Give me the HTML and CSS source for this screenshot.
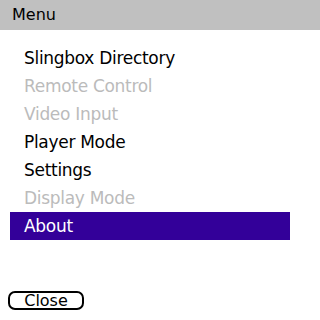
FILE: index.html
```html
<!DOCTYPE html>
<html>
<head>
<meta charset="utf-8">
<link rel="stylesheet" href="styles.css">
</head>
<body>
<div class="screen">
  <div class="title">Menu</div>
  <ul class="menu">
    <li class="item">Slingbox Directory</li>
    <li class="item disabled">Remote Control</li>
    <li class="item disabled">Video Input</li>
    <li class="item">Player Mode</li>
    <li class="item">Settings</li>
    <li class="item disabled">Display Mode</li>
    <li class="item selected">About</li>
  </ul>
  <div class="actions">
    <div class="btn">Close</div>
  </div>
</div>
</body>
</html>
```
FILE: styles.css
```css
html, body {
  margin: 0;
  padding: 0;
  background: #ffffff;
}
.screen {
  width: 320px;
  height: 320px;
  display: flex;
  flex-direction: column;
  font-family: "DejaVu Sans", sans-serif;
  color: #000;
}
.title {
  height: 30px;
  background: #c0c0c0;
  font-size: 16px;
  line-height: 30px;
  padding-left: 12px;
}
.menu {
  list-style: none;
  margin: 14px 0 0 10px;
  padding: 0;
  width: 280px;
}
.item {
  height: 28px;
  line-height: 28px;
  font-size: 17px;
  letter-spacing: -0.3px;
  padding-left: 14px;
}
.disabled {
  color: #bbbbbb;
}
.selected {
  background: #330099;
  color: #ffffff;
}
.actions {
  margin-top: 51px;
  padding-left: 8px;
  display: flex;
}
.btn {
  width: 76px;
  height: 19px;
  box-sizing: border-box;
  border: 2px solid #000;
  border-radius: 7px;
  background: #fff;
  font-size: 16px;
  display: flex;
  align-items: center;
  justify-content: center;
  color: #000;
}
```
